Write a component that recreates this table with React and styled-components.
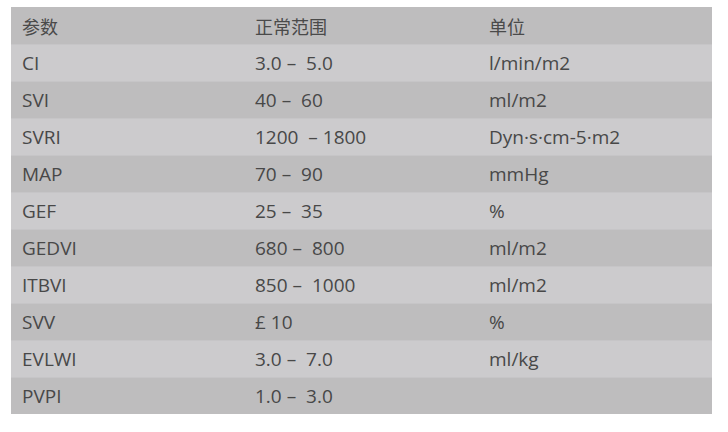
import React from "react";
import styled, { createGlobalStyle } from "styled-components";

const GlobalStyle = createGlobalStyle`
  html, body {
    margin: 0;
    padding: 0;
    background: #ffffff;
  }
`;

const rows = [
  ["CI", "3.0 –  5.0", "l/min/m2"],
  ["SVI", "40 –  60", "ml/m2"],
  ["SVRI", "1200  – 1800", "Dyn·s·cm-5·m2"],
  ["MAP", "70 –  90", "mmHg"],
  ["GEF", "25 –  35", "%"],
  ["GEDVI", "680 –  800", "ml/m2"],
  ["ITBVI", "850 –  1000", "ml/m2"],
  ["SVV", "£ 10", "%"],
  ["EVLWI", "3.0 –  7.0", "ml/kg"],
  ["PVPI", "1.0 –  3.0", ""],
];

const Page = styled.div`
  padding: 7px 16px 0 11px;
`;

const Table = styled.div`
  width: 701px;
  font-family: "Open Sans", "Noto Sans CJK SC", sans-serif;
  font-size: 19px;
  color: #484848;
`;

const Row = styled.div`
  display: grid;
  grid-template-columns: 233px 234px 234px;
  height: 37px;
  align-items: center;
  background: ${(p) => (p.$light ? "#cccbcd" : "#bebdbe")};
  border-top: ${(p) => (p.$first ? "none" : "1px solid #c6c5c7")};
  box-sizing: border-box;
`;

const Cell = styled.div`
  padding-left: 11px;
  white-space: pre;
`;

const HeadCell = styled(Cell)`
  font-family: "Noto Sans CJK SC", sans-serif;
  font-size: 18px;
  color: #4a4a4a;
`;

export default function App() {
  return (
    <>
      <GlobalStyle />
      <Page>
        <Table>
          <Row $first>
            <HeadCell>参数</HeadCell>
            <HeadCell>正常范围</HeadCell>
            <HeadCell>单位</HeadCell>
          </Row>
          {rows.map((r, i) => (
            <Row key={r[0]} $light={i % 2 === 0}>
              <Cell>{r[0]}</Cell>
              <Cell>{r[1]}</Cell>
              <Cell>{r[2]}</Cell>
            </Row>
          ))}
        </Table>
      </Page>
    </>
  );
}
